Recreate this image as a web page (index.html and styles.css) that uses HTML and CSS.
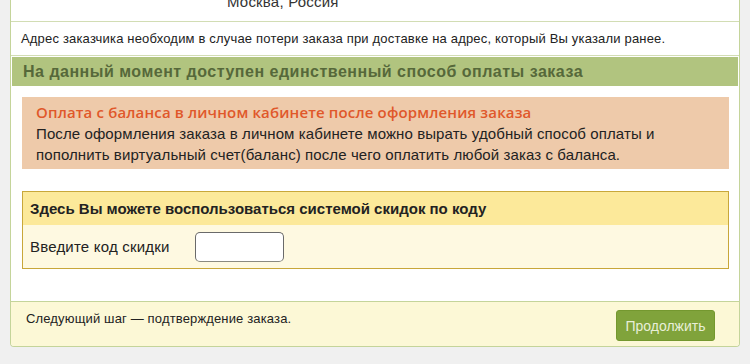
FILE: index.html
```
<!DOCTYPE html>
<html>
    <head>
        <title>Оформление заказа</title>
        <meta charset="utf-8">
        <link rel="stylesheet" href="styles.css">
    </head>
    <body>
        <div class="order_panel">
            <div class="addr_row"><span class="addr_city">Москва, Россия</span></div>
            <div class="note_row">Адрес заказчика необходим в случае потери заказа при доставке на адрес, который Вы указали ранее.</div>

            <div class="pay_section">
                <h1 class="pay_head">На данный момент доступен единственный способ оплаты заказа</h1>
                <div class="pay_body">
                    <div class="pay_box">
                        <h2>Оплата с баланса в личном кабинете после оформления заказа</h2>
                        <p>После оформления заказа в личном кабинете можно вырать удобный способ оплаты и пополнить виртуальный счет(баланс) после чего оплатить любой заказ с баланса.</p>
                    </div>

                    <div class="coupon_box">
                        <div class="coupon_head">Здесь Вы можете воспользоваться системой скидок по коду</div>
                        <form class="coupon_body" name="coupon_form">
                            <label for="coupon">Введите код скидки</label>
                            <input type="text" id="coupon" name="coupon">
                        </form>
                    </div>
                </div>
            </div>

            <div class="next_row">
                <span class="next_text">Следующий шаг — подтверждение заказа.</span>
                <button type="button" class="next_btn">Продолжить</button>
            </div>
        </div>
    </body>
</html>
```

FILE: styles.css
```
body {
	margin: 0;
	background: #f0f0f0;
	font-family: "Liberation Sans", Arial, sans-serif;
	color: #222;
}
.order_panel {
	margin: 0 10px;
	background: #fff;
	border: 1px solid #c4d49a;
	border-top: none;
	border-radius: 0 0 4px 4px;
	overflow: hidden;
}
.addr_row {
	height: 21px;
	overflow: hidden;
	display: flex;
	align-items: flex-end;
	padding-left: 216px;
	border-bottom: 1px solid #d2ddb4;
}
.addr_city {
	font-size: 15px;
	line-height: 17px;
	margin-bottom: 11px;
	letter-spacing: 0.2px;
	color: #333;
}
.note_row {
	height: 33px;
	display: flex;
	align-items: center;
	padding-left: 10px;
	font-size: 13px;
	letter-spacing: 0.18px;
	color: #222;
	border-bottom: 1px solid #d2ddb4;
}
.pay_section {
	padding: 1px 1px 0 1px;
}
.pay_head {
	margin: 0;
	height: 29px;
	line-height: 29px;
	padding-left: 11px;
	background: #b1c47f;
	color: #56683a;
	font-size: 16px;
	letter-spacing: 0.5px;
	font-weight: bold;
}
.pay_body {
	padding: 11px 9px 32px 10px;
}
.pay_box {
	background: #eecaaa;
	padding: 5px 14px 4px 14px;
}
.pay_box h2 {
	margin: 0;
	font-family: "Open Sans", "DejaVu Sans", sans-serif;
	font-size: 15px;
	line-height: 21px;
	font-weight: 600;
	letter-spacing: 0.15px;
	color: #e0582a;
}
.pay_box p {
	margin: 0;
	font-size: 15px;
	line-height: 21px;
	letter-spacing: 0.1px;
	color: #222;
}
.coupon_box {
	margin-top: 22px;
	border: 1px solid #c8a73a;
}
.coupon_head {
	height: 33px;
	line-height: 33px;
	padding-left: 7px;
	background: #fce99a;
	font-size: 15px;
	font-weight: bold;
	color: #222;
}
.coupon_body {
	margin: 0;
	height: 43px;
	display: flex;
	align-items: center;
	padding-left: 7px;
	background: #fef9e1;
	font-size: 15px;
	letter-spacing: 0.2px;
}
.coupon_body label {
	width: 165px;
	color: #222;
}
.coupon_body input {
	box-sizing: border-box;
	width: 89px;
	height: 30px;
	border: 1px solid #6a6a6a;
	border-bottom-color: #8a8a80;
	border-radius: 5px;
	background: #fff;
}
.next_row {
	height: 44px;
	display: flex;
	justify-content: space-between;
	align-items: flex-start;
	padding: 0 24px 0 15px;
	background: #fcf8d6;
	border-top: 1px solid #c4d49a;
}
.next_text {
	margin-top: 9px;
	font-size: 13px;
	line-height: 16px;
	letter-spacing: 0.15px;
	color: #222;
}
.next_btn {
	margin-top: 8px;
	box-sizing: border-box;
	width: 99px;
	height: 31px;
	background: #80a33b;
	border: 1px solid #74982f;
	border-radius: 3px;
	color: #e8efd8;
	font-family: "Liberation Sans", Arial, sans-serif;
	font-size: 14px;
	padding: 0;
}
```
